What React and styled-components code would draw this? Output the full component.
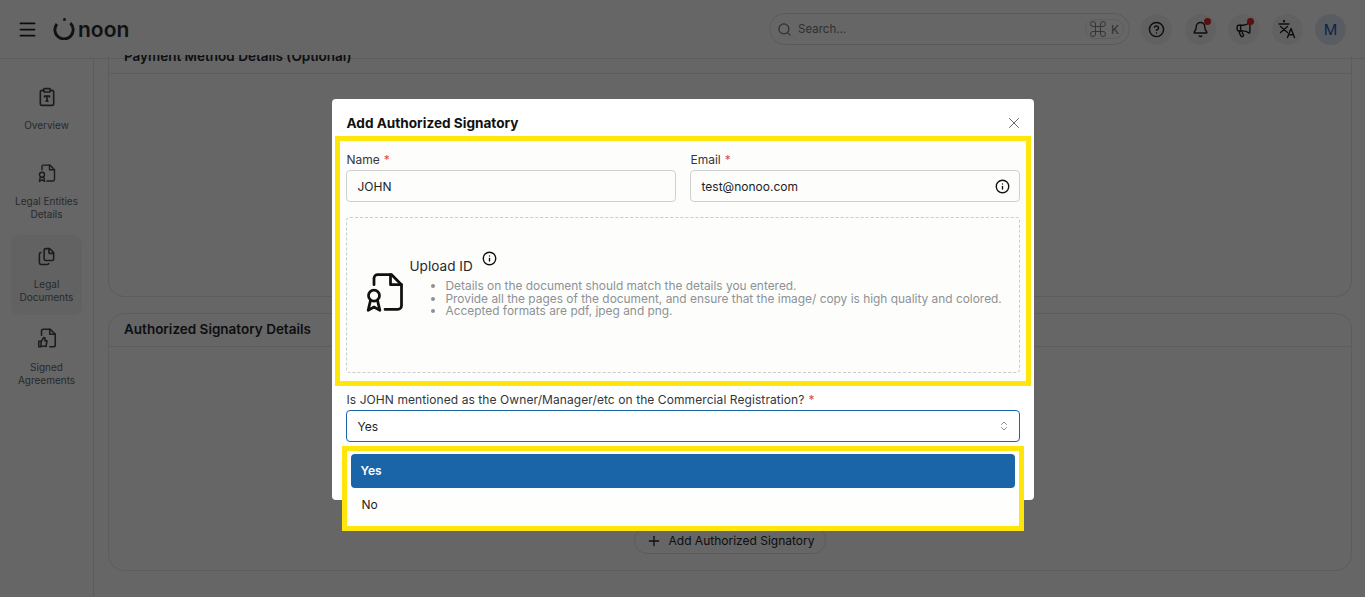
import React from "react";
import styled, { createGlobalStyle } from "styled-components";
import { Menu, Search, Command, CircleHelp, Bell, Megaphone, ClipboardType, Files, Info, X, ChevronsUpDown, Plus } from "lucide-react";

const GlobalStyle = createGlobalStyle`
  html, body { margin: 0; padding: 0; height: 100%; overflow: hidden; }
  body { font-family: Inter, "Open Sans", sans-serif; background: #fff; color: #1c1e22; }
  * { box-sizing: border-box; }
`;

const Page = styled.div`
  width: 1365px;
  height: 597px;
  display: flex;
  flex-direction: column;
  overflow: hidden;
  position: relative;
`;
const Header = styled.header`
  height: 59px;
  flex: none;
  display: flex;
  align-items: center;
  padding: 0 19px 0 17px;
  border-bottom: 1px solid #e6e6e6;
`;
const MenuButton = styled.div`
  display: flex;
  margin-right: 15px;
`;
const Logo = styled.div`
  display: flex;
  align-items: center;
  gap: 3px;
  font-size: 21px;
  font-weight: 600;
  color: #2b2e33;
`;
const SearchBox = styled.div`
  width: 361px;
  height: 32px;
  margin-left: auto;
  display: flex;
  align-items: center;
  gap: 6px;
  padding: 0 5px 0 7px;
  border: 1px solid #e2e2e2;
  border-radius: 16px;
  font-size: 11.5px;
  color: #75797f;
`;
const Shortcut = styled.div`
  margin-left: auto;
  height: 20px;
  padding: 0 4px 0 2px;
  display: flex;
  align-items: center;
  gap: 3px;
  border: 1px solid #e8e8e8;
  border-radius: 10px;
  font-size: 12px;
`;
const Round = styled.div`
  position: relative;
  width: 31px;
  height: 31px;
  margin-left: ${props => props.$gap || 12.4}px;
  border-radius: 50%;
  background: ${props => props.$user ? "#dfe8f3" : "#f3f3f3"};
  color: ${props => props.$user ? "#1d58b0" : "#202226"};
  display: flex;
  align-items: center;
  justify-content: center;
  font-size: 15px;
`;
const Dot = styled.span`
  position: absolute;
  top: 4px;
  right: 5px;
  width: 7px;
  height: 7px;
  border-radius: 50%;
  background: #e0262c;
`;
const Body = styled.div`
  flex: 1;
  display: flex;
  min-height: 0;
  margin-top: -4px;
`;
const Sidebar = styled.nav`
  width: 94px;
  flex: none;
  margin-top: 4px;
  border-right: 1px solid #e6e6e6;
  padding: 20px 11px 0 11px;
  display: flex;
  flex-direction: column;
  gap: 4px;
`;
const NavItem = styled.div`
  padding: ${props => props.$active ? 12 : 8}px 2px 0;
  height: ${props => props.$height}px;
  flex: none;
  display: flex;
  flex-direction: column;
  align-items: center;
  border-radius: 8px;
  background: ${props => props.$active ? "#f5f5f5" : "transparent"};
  color: #43464c;
`;
const NavLabel = styled.div`
  margin-top: 12px;
  font-size: 10px;
  line-height: 13px;
  text-align: center;
  color: #666a70;
`;
const Main = styled.main`
  flex: 1;
  min-width: 0;
  overflow: hidden;
  padding: 0 13px 0 14px;
  display: flex;
  flex-direction: column;
  gap: 16px;
`;
const Card = styled.section`
  height: ${props => props.$height}px;
  margin-top: ${props => props.$offset || 0}px;
  flex: none;
  border: 1px solid #e6e6e6;
  border-radius: 16px;
  display: flex;
  flex-direction: column;
`;
const CardHead = styled.div`
  height: 33px;
  flex: none;
  padding: 0 15px 3px;
  display: flex;
  align-items: center;
  border-bottom: 1px solid #e6e6e6;
  font-size: 13.5px;
  font-weight: 600;
  color: #24262b;
`;
const CardBody = styled.div`
  flex: 1;
  display: flex;
  justify-content: center;
  align-items: flex-end;
  padding: 0 0 16px 0;
`;
const AddButton = styled.div`
  width: 192px;
  height: 27px;
  display: flex;
  align-items: center;
  justify-content: center;
  gap: 7px;
  border: 1px solid #e2e2e2;
  border-radius: 13px;
  font-size: 12px;
  color: #24262b;
`;
const Overlay = styled.div`
  position: absolute;
  inset: 0;
  background: rgba(0, 0, 0, 0.6);
  display: flex;
  align-items: center;
  justify-content: center;
  padding-top: 1px;
`;
const Modal = styled.div`
  position: relative;
  width: 702px;
  height: 401px;
  background: #fff;
  border-radius: 4px;
  padding: 0 3px;
  display: flex;
  flex-direction: column;
`;
const ModalHead = styled.div`
  height: 37px;
  flex: none;
  padding: 11px 8px 0 12px;
  display: flex;
  align-items: center;
  justify-content: space-between;
  font-size: 13.6px;
  font-weight: 700;
  color: #111;
`;
const Highlight = styled.div`
  flex: none;
  height: 250px;
  border: 5px solid #ffe60a;
  padding: 11px 6px 0 6px;
  display: flex;
  flex-direction: column;
  background: #fdfefc;
`;
const FieldRow = styled.div`
  display: grid;
  grid-template-columns: 330px 330px;
  gap: 14px;
`;
const Label = styled.div`
  height: 16px;
  display: flex;
  align-items: center;
  padding-left: 1px;
  font-size: 12px;
  letter-spacing: ${props => props.$long ? 0.08 : 0}px;
  color: #33363b;
  margin-bottom: 2px;
  white-space: nowrap;
`;
const Star = styled.span`
  color: #e5484d;
  margin-left: 4px;
`;
const Input = styled.div`
  height: 32px;
  display: flex;
  align-items: center;
  justify-content: space-between;
  padding: 1px 9px 0 11px;
  border: 1px solid ${props => props.$focus ? "#1a64a8" : "#cfd0d2"};
  border-radius: 4px;
  font-size: 12px;
  color: #222;
`;
const Upload = styled.div`
  height: 156px;
  margin-top: 15px;
  border: 1px dashed #c9cbce;
  border-radius: 4px;
  background: #fdfefc;
  display: flex;
  align-items: center;
  padding-left: 16px;
`;
const UploadIcon = styled.div`
  display: flex;
  margin-top: -5px;
  color: #111;
`;
const UploadText = styled.div`
  margin-left: 3px;
  margin-top: -16px;
`;
const UploadTitle = styled.div`
  display: flex;
  align-items: flex-start;
  font-size: 13.6px;
  color: #26282c;
  height: 25px;
  padding-top: 3px;
`;
const TitleInfo = styled.span`
  margin-left: 9px;
  margin-top: -7px;
  display: flex;
`;
const Hints = styled.ul`
  margin: 0;
  padding: 0 0 0 36px;
  font-size: 11.9px;
  line-height: 12.7px;
  color: #8d9196;
`;
const Question = styled.div`
  padding: 6px 11px 0 11px;
`;
const Dropdown = styled.div`
  position: absolute;
  left: 10px;
  top: 347px;
  width: 682px;
  height: 85px;
  border: 5px solid #ffe60a;
  background: #fefefc;
  padding: 3px 4px;
`;
const Option = styled.div`
  height: 34px;
  display: flex;
  align-items: center;
  padding: 0 ${props => props.$selected ? 10 : 11}px;
  border-radius: 4px;
  font-size: 12px;
  background: ${props => props.$selected ? "#1a64a8" : "transparent"};
  color: ${props => props.$selected ? "#fff" : "#222"};
  font-weight: ${props => props.$selected ? 600 : 400};
`;

const DocBadge = ({ size = 24, stroke = 1.8 }) => (
  <svg width={size} height={size} viewBox="0 0 24 24" fill="none" stroke="currentColor" strokeWidth={stroke} strokeLinecap="round" strokeLinejoin="round">
    <path d="M6 8V4.5A2 2 0 0 1 8 2.5h7.5L21 8v11.5a2 2 0 0 1-2 2h-7" />
    <path d="M15 2.5V8h6" />
    <circle cx="6" cy="14" r="3" />
    <path d="M4 17l-1.2 5 3.2-1.8L9.2 22 8 17" />
  </svg>
);

const DocThumb = () => (
  <svg width="22" height="22" viewBox="0 0 24 24" fill="none" stroke="currentColor" strokeWidth="1.7" strokeLinecap="round" strokeLinejoin="round">
    <path d="M6 9V4.5a2 2 0 0 1 2-2h7.5L21 8v11.5a2 2 0 0 1-2 2h-4" />
    <path d="M15 2.5V8h6" />
    <path d="M3 15.5h2.5v6H3zM5.5 16l3-4.5c1.2 0 1.6.8 1.4 1.8l-.4 1.7h2.5l-1 6H5.5" />
  </svg>
);

const LogoMark = () => (
  <svg width="22" height="22" viewBox="0 0 24 24" fill="none" stroke="#2b2e33" strokeWidth="3.2">
    <path d="M18.9 5.6a10 10 0 1 1-14.6 .9" />
    <path d="M11.2 1.5l2.6 .3" />
  </svg>
);

const TranslateIcon = () => (
  <svg width="20" height="20" viewBox="0 0 20 20" fill="none" stroke="currentColor" strokeWidth="1.4" strokeLinecap="round" strokeLinejoin="round">
    <circle cx="7" cy="2.2" r=".5" />
    <path d="M2 5h10" />
    <path d="M3.5 7.5l7 6M10.5 7.5l-7 6" />
    <path d="M10.5 18.5l3.5-9 3.5 9M11.7 15.8h4.6" />
  </svg>
);

const App = () => (
  <Page>
    <GlobalStyle />
    <Header>
      <MenuButton><Menu size={21} strokeWidth={2} /></MenuButton>
      <Logo><LogoMark />noon</Logo>
      <SearchBox>
        <Search size={15} />
        Search...
        <Shortcut>
          <Command size={20} strokeWidth={1.1} />K
        </Shortcut>
      </SearchBox>
      <Round $gap={11.4}><CircleHelp size={17} /></Round>
      <Round><Bell size={17} /><Dot /></Round>
      <Round><Megaphone size={17} /><Dot /></Round>
      <Round><TranslateIcon /></Round>
      <Round $user>M</Round>
    </Header>
    <Body>
      <Sidebar>
        <NavItem $height={72}>
          <ClipboardType size={20} />
          <NavLabel>Overview</NavLabel>
        </NavItem>
        <NavItem $height={76}>
          <DocBadge size={20} stroke={1.7} />
          <NavLabel>Legal Entities Details</NavLabel>
        </NavItem>
        <NavItem $height={80} $active>
          <Files size={19} />
          <NavLabel>Legal Documents</NavLabel>
        </NavItem>
        <NavItem $height={80}>
          <DocThumb />
          <NavLabel>Signed Agreements</NavLabel>
        </NavItem>
      </Sidebar>
      <Main>
        <Card $height={257} $offset={-15}>
          <CardHead>Payment Method Details (Optional)</CardHead>
        </Card>
        <Card $height={258}>
          <CardHead>Authorized Signatory Details</CardHead>
          <CardBody>
            <AddButton><Plus size={16} />Add Authorized Signatory</AddButton>
          </CardBody>
        </Card>
      </Main>
    </Body>
    <Overlay>
      <Modal>
        <ModalHead>
          Add Authorized Signatory
          <X size={18} strokeWidth={1.2} color="#55585c" />
        </ModalHead>
        <Highlight>
          <FieldRow>
            <div>
              <Label>Name<Star>*</Star></Label>
              <Input>JOHN</Input>
            </div>
            <div>
              <Label>Email<Star>*</Star></Label>
              <Input>test@nonoo.com<Info size={15} strokeWidth={2.2} color="#111" /></Input>
            </div>
          </FieldRow>
          <Upload>
            <UploadIcon><DocBadge size={44} stroke={1.5} /></UploadIcon>
            <UploadText>
              <UploadTitle>Upload ID<TitleInfo><Info size={15} strokeWidth={2.2} color="#111" /></TitleInfo></UploadTitle>
              <Hints>
                <li>Details on the document should match the details you entered.</li>
                <li>Provide all the pages of the document, and ensure that the image/ copy is high quality and colored.</li>
                <li>Accepted formats are pdf, jpeg and png.</li>
              </Hints>
            </UploadText>
          </Upload>
        </Highlight>
        <Question>
          <Label $long>Is JOHN mentioned as the Owner/Manager/etc on the Commercial Registration?<Star>*</Star></Label>
          <Input $focus>Yes<ChevronsUpDown size={12} color="#8d9196" /></Input>
        </Question>
        <Dropdown>
          <Option $selected>Yes</Option>
          <Option>No</Option>
        </Dropdown>
      </Modal>
    </Overlay>
  </Page>
);

export default App;
